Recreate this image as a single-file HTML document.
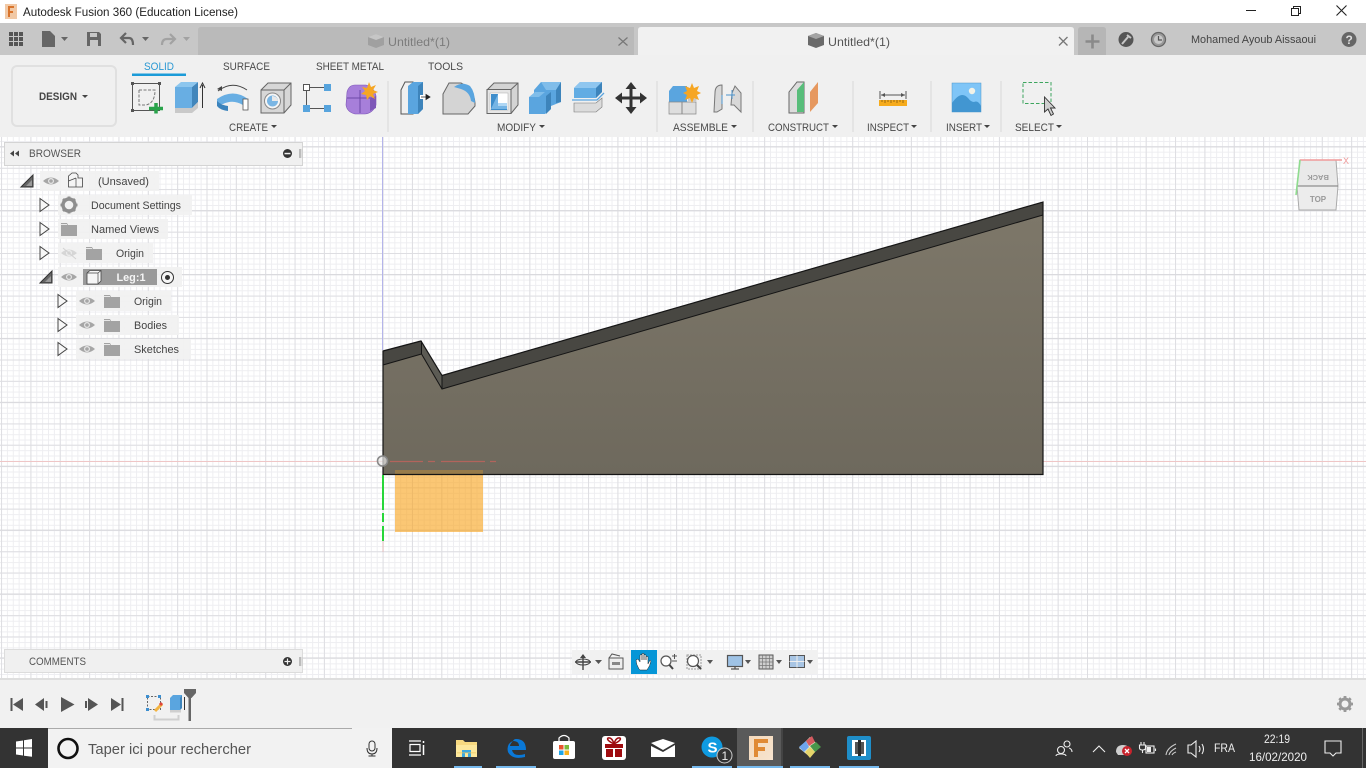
<!DOCTYPE html>
<html><head><meta charset="utf-8"><title>Autodesk Fusion 360</title>
<style>
html,body{margin:0;padding:0;width:1366px;height:768px;overflow:hidden;background:#fff}
svg{display:block}
text{font-family:"Liberation Sans",sans-serif}
.t{font-size:11px;fill:#4a4a4a}
.l{font-size:11px;fill:#484848}
</style></head><body>
<svg width="1366" height="768" viewBox="0 0 1366 768" xmlns="http://www.w3.org/2000/svg">
<defs>
<pattern id="gm" x="382.6" y="274.3" width="5.87" height="5.33" patternUnits="userSpaceOnUse"><path d="M.5 0V5.33M0 .5H5.87" stroke="#eeeef1" stroke-width="1" fill="none"/></pattern>
<pattern id="gM" x="382.6" y="274.3" width="29.35" height="21.3" patternUnits="userSpaceOnUse"><path d="M.5 0V21.3M0 .5H29.35" stroke="#dedee2" stroke-width="1" fill="none"/></pattern>
<pattern id="gX" x="0" y="274" width="100" height="63.9" patternUnits="userSpaceOnUse"><path d="M0 .5H100" stroke="#dadade" stroke-width="1" fill="none"/></pattern>
<linearGradient id="body" x1="0" y1="0" x2="0" y2="1"><stop offset="0" stop-color="#7d7769"/><stop offset="1" stop-color="#6e695d"/></linearGradient>
<linearGradient id="fus" x1="0" y1="0" x2="1" y2="1"><stop offset="0" stop-color="#f5d9bb"/><stop offset="1" stop-color="#f7e4cf"/></linearGradient>
<g id="eye"><path d="M-8 0Q0-7 8 0Q0 7-8 0Z" fill="#a6a6a6"/><circle r="3" fill="#e6e6e6"/><circle r="1.8" fill="#a6a6a6"/></g>
<g id="folder"><path d="M0 1H6L7 3H16V14H0Z" fill="#a3a3a3"/><rect y="2" width="6" height="1" fill="#e8e8e8"/></g>
<path id="tri" d="M0-6.5L9 0L0 6.5Z" fill="#f7f7f7" stroke="#444" stroke-width="1"/>
<g id="open"><path d="M-6 6L6-6V6Z" fill="#666" stroke="#333" stroke-width="1"/><path d="M-1 5L5-1V5Z" fill="#999"/></g>
</defs>

<!-- canvas -->
<rect x="0" y="137" width="1366" height="543" fill="#fff"/>
<rect x="0" y="137" width="1366" height="543" fill="url(#gm)"/>
<rect x="0" y="137" width="1366" height="543" fill="url(#gM)"/>
<rect x="0" y="137" width="1366" height="543" fill="url(#gX)"/>
<path d="M0 461.5H1366" stroke="#efc6c6" stroke-width="1"/>
<path d="M382.5 137V350" stroke="#b4b4ea" stroke-width="1"/>

<!-- title bar -->
<rect width="1366" height="23" fill="#fff"/>
<rect x="5" y="4" width="12" height="15" fill="#f1c9a6"/>
<path d="M8 6H14V8H10V11H13V13H10V17H8Z" fill="#d9742c"/>
<text x="23" y="16" font-size="12.2" fill="#222" textLength="215" lengthAdjust="spacingAndGlyphs">Autodesk Fusion 360 (Education License)</text>
<path d="M1246 10.5H1256" stroke="#222"/>
<path d="M1291.5 8.5H1298.5V15.5H1291.5ZM1293.5 8.5V6.5H1300.5V13.5H1298.5" fill="none" stroke="#222"/>
<path d="M1336.5 5.5L1346.5 15.5M1346.5 5.5L1336.5 15.5" stroke="#222" stroke-width="1.1"/>

<!-- tab bar -->
<rect y="23" width="1366" height="32" fill="#c7c7c7"/>
<path d="M198 55V30Q198 27 201 27H634V55Z" fill="#bababa"/>
<path d="M638 55V30Q638 27 641 27H1071Q1074 27 1074 30V55Z" fill="#f1f1f1"/>
<path d="M1078 55V30Q1078 27 1081 27H1103Q1106 27 1106 30V55Z" fill="#b6b6b6"/>
<path d="M1092.5 34.5V48.5M1085.5 41.5H1099.5" stroke="#8a8a8a" stroke-width="2.6"/>
<!-- app grid -->
<g fill="#555"><rect x="9" y="32" width="4" height="4"/><rect x="14" y="32" width="4" height="4"/><rect x="19" y="32" width="4" height="4"/><rect x="9" y="37" width="4" height="4"/><rect x="14" y="37" width="4" height="4"/><rect x="19" y="37" width="4" height="4"/><rect x="9" y="42" width="4" height="4"/><rect x="14" y="42" width="4" height="4"/><rect x="19" y="42" width="4" height="4"/></g>
<path d="M42 31H50L55 36V47H42Z" fill="#666"/><path d="M61 37H68L64.5 41Z" fill="#666"/>
<path d="M87 32H99L101 34V46H87Z" fill="#666"/><rect x="90" y="33" width="7" height="4" fill="#c7c7c7"/><rect x="90" y="40" width="8" height="6" fill="#c7c7c7"/>
<path d="M126 33L121 38L126 43M121 38H129Q133 38 133 45" fill="none" stroke="#666" stroke-width="2.2"/><path d="M142 37H149L145.5 41Z" fill="#666"/>
<path d="M170 34L175 39L170 44M175 39H167Q162 39 162 45" fill="none" stroke="#a2a2a2" stroke-width="2.2"/><path d="M183 37H190L186.5 41Z" fill="#a2a2a2"/>
<!-- tab text -->
<path d="M368 37L376 34L384 37V45L376 48L368 45Z" fill="#a0a0a0"/><path d="M368 37L376 40L384 37L376 34Z" fill="#c6c6c6"/>
<text x="388" y="46" font-size="12" fill="#7c7c7c" textLength="62" lengthAdjust="spacingAndGlyphs">Untitled*(1)</text>
<path d="M618.5 37.5L627.5 45.5M627.5 37.5L618.5 45.5" stroke="#777" stroke-width="1.2"/>
<path d="M808 36L816 33L824 36V45L816 48L808 45Z" fill="#6a6a6a"/><path d="M808 36L816 39L824 36L816 33Z" fill="#a4a4a4"/>
<text x="828" y="46" font-size="12" fill="#555" textLength="62" lengthAdjust="spacingAndGlyphs">Untitled*(1)</text>
<path d="M1059 37L1067.5 45.5M1067.5 37L1059 45.5" stroke="#777" stroke-width="1.3"/>
<circle cx="1126" cy="39.5" r="7.5" fill="#555"/><path d="M1122 44L1128 37M1127 35L1131 38" stroke="#c7c7c7" stroke-width="2"/>
<circle cx="1158.5" cy="39.5" r="7" fill="#999" stroke="#666" stroke-width="1.3"/><circle cx="1158.5" cy="39.5" r="4.5" fill="#c7c7c7"/><path d="M1158.5 36V40H1162" fill="none" stroke="#555" stroke-width="1.2"/>
<text x="1191" y="43" font-size="11" fill="#444" textLength="125" lengthAdjust="spacingAndGlyphs">Mohamed Ayoub Aissaoui</text>
<circle cx="1349" cy="39.5" r="7.5" fill="#666"/><text x="1345.5" y="44" font-size="12" font-weight="bold" fill="#ddd">?</text>

<!-- toolbar -->
<rect y="55" width="1366" height="82" fill="#f0f0f0"/>
<rect x="12" y="66" width="104" height="60" rx="5" fill="#f0f0f0" stroke="#e0e0e0" stroke-width="2"/>
<text x="39" y="100" font-size="10.8" font-weight="bold" fill="#444" textLength="38" lengthAdjust="spacingAndGlyphs">DESIGN</text>
<path d="M82 95H88L85 98Z" fill="#444"/>
<text x="144" y="70" class="t" style="fill:#2a98d3" textLength="30" lengthAdjust="spacingAndGlyphs">SOLID</text>
<rect x="132" y="73.5" width="54" height="2.5" fill="#1b9bd8"/>
<text x="223" y="70" class="t" textLength="47" lengthAdjust="spacingAndGlyphs">SURFACE</text>
<text x="316" y="70" class="t" textLength="68" lengthAdjust="spacingAndGlyphs">SHEET METAL</text>
<text x="428" y="70" class="t" textLength="35" lengthAdjust="spacingAndGlyphs">TOOLS</text>

<!-- panel labels -->
<text x="229" y="131" class="l" textLength="39" lengthAdjust="spacingAndGlyphs">CREATE</text><path d="M271 125H277L274 128Z" fill="#444"/>
<text x="497" y="131" class="l" textLength="39" lengthAdjust="spacingAndGlyphs">MODIFY</text><path d="M539 125H545L542 128Z" fill="#444"/>
<text x="673" y="131" class="l" textLength="55" lengthAdjust="spacingAndGlyphs">ASSEMBLE</text><path d="M731 125H737L734 128Z" fill="#444"/>
<text x="768" y="131" class="l" textLength="61" lengthAdjust="spacingAndGlyphs">CONSTRUCT</text><path d="M832 125H838L835 128Z" fill="#444"/>
<text x="867" y="131" class="l" textLength="42" lengthAdjust="spacingAndGlyphs">INSPECT</text><path d="M911 125H917L914 128Z" fill="#444"/>
<text x="946" y="131" class="l" textLength="36" lengthAdjust="spacingAndGlyphs">INSERT</text><path d="M984 125H990L987 128Z" fill="#444"/>
<text x="1015" y="131" class="l" textLength="39" lengthAdjust="spacingAndGlyphs">SELECT</text><path d="M1056 125H1062L1059 128Z" fill="#444"/>
<g stroke="#e0e0e0" stroke-width="1.5"><path d="M388 81V132M657 81V132M753 81V132M853 81V132M931 81V132M1001 81V132"/></g>

<!-- create icons -->
<rect x="132.5" y="83.5" width="27" height="27" fill="none" stroke="#555" stroke-width="1"/>
<g fill="#555"><rect x="131" y="82" width="3" height="3"/><rect x="158" y="82" width="3" height="3"/><rect x="131" y="109" width="3" height="3"/></g>
<path d="M139 90V105H146Q155 103 155 90Z" fill="none" stroke="#777" stroke-dasharray="3 1.5"/>
<path d="M156 103V113.5M149 108.5H163" stroke="#29a34a" stroke-width="3.5"/>
<path d="M175 87H192V108H175Z" fill="#68aee3"/><path d="M192 87L198 82V102L192 108Z" fill="#4286bb"/><path d="M175 87L181 82H198L192 87Z" fill="#8cc6ee"/>
<path d="M175 108H192L198 102V108L192 113H175Z" fill="#c9c9c9"/>
<path d="M202.5 108V85M200 88L202.5 83L205 88" fill="none" stroke="#333" stroke-width="1"/>
<path d="M217 99Q233 88 248 99L248 109L243 109L243 105Q233 99 223 104L217 104Z" fill="#68aee3"/><path d="M217 101V106Q220 110 228 111V106Q221 105 217 101Z" fill="#3b83bc"/><rect x="243" y="99" width="5" height="11" fill="#fff" stroke="#555" stroke-width=".8"/>
<path d="M218 91Q232 80 247 90" fill="none" stroke="#444"/><path d="M217 89L222 86L222 91Z" fill="#444"/>
<path d="M261 90L268 83H291V105L284 113H261Z" fill="#d7d7d7" stroke="#666" stroke-width="1"/><path d="M261 90H284V113M284 90L291 83" fill="none" stroke="#666"/>
<circle cx="272.5" cy="101" r="8" fill="#f5f5f5" stroke="#888"/><circle cx="272.5" cy="101" r="5.5" fill="#7ab6e4"/><path d="M272 96A5.5 5.5 0 0 1 278 101H272Z" fill="#e9e9e9"/>
<rect x="303.5" y="84.5" width="6" height="6" fill="#fff" stroke="#555"/><rect x="324" y="84" width="7" height="7" fill="#57a4dd"/><rect x="303" y="105" width="7" height="7" fill="#57a4dd"/><rect x="324" y="105" width="7" height="7" fill="#57a4dd"/>
<path d="M310 87.5H324M310 108.5H324M306.5 91V105" stroke="#555"/>
<path d="M347 92Q349 85 355 85H366Q374 87 376 96V105Q373 113 365 114H355Q347 112 346 105Z" fill="#a77fda" stroke="#7e57b8" stroke-width=".6"/><path d="M347 98H372M360 90V113" stroke="#6e49a8" fill="none"/><path d="M370 99L376 96V108L370 111Z" fill="#7e57b8"/>
<path d="M369 82L371 87L376 85L373 90L378 92L373 94L375 99L370 96L367 100L366 95L361 94L365 91L362 87L367 88Z" fill="#f6a623"/>

<!-- modify icons -->
<path d="M401 90L405 82H413V114H401Z" fill="#f0f0f0" stroke="#555"/><path d="M408 86L413 82H423V109L418 114H408Z" fill="#5aa5df"/><path d="M418 86L423 82V109L418 114Z" fill="#3d84bb"/>
<rect x="420" y="95" width="8" height="4" fill="#fff"/><path d="M421 97H429M426 94.5L430 97L426 99.5Z" fill="#222" stroke="#222" stroke-width=".8"/>
<path d="M443 94L449 83H461Q474 90 475 103V106L468 114H443Z" fill="#d4d4d4" stroke="#666"/><path d="M454 87Q462 81 470 86Q475 92 475 103L471 101Q470 92 461 89Z" fill="#5aa5df"/>
<path d="M487.5 89.5L494 83H518V105L511 113.5M511 89.5L518 83" fill="#d4d4d4" stroke="#666"/><rect x="487" y="89.5" width="24" height="24" fill="#e6e6e6" stroke="#666"/>
<rect x="490" y="93" width="18" height="17" fill="#fff" stroke="#aaa" stroke-width=".5"/><path d="M491 94H498V106H507V110H491Z" fill="#3e8dcb"/><path d="M498 94V103H507V109H491Z" fill="#8fc6ef" opacity=".7"/>
<path d="M529 97L534 97V90L541 82H561V102L551 106V109L545 114H529Z" fill="#5aa5df"/><path d="M529 97L535 92H545L539 97Z" fill="#7fbdea"/><path d="M546 90L541 82H561L556 90Z" fill="#80bdea"/><path d="M556 90L561 82V102L556 103Z" fill="#3d84bb"/><path d="M546 96L551 92V109L546 114Z" fill="#3d84bb"/>
<path d="M574 88L580 82H602V92L596 98H574Z" fill="#62ace3"/><path d="M574 88L580 82H602L596 88Z" fill="#8fc6ef"/><path d="M596 88L602 82V92L596 98Z" fill="#3d84bb"/>
<path d="M572 100H597L604 93" fill="none" stroke="#5aa5df" stroke-width="1.3"/><path d="M574 103H596L602 98V107L596 112H574Z" fill="#dcdcdc" stroke="#777" stroke-width=".6"/>
<path d="M631 84V112M617 98H645" stroke="#333" stroke-width="3"/><path d="M631 82L625.5 89H636.5ZM631 114L625.5 107H636.5ZM615 98L622 92.5V103.5ZM647 98L640 92.5V103.5Z" fill="#333"/>

<!-- assemble -->
<path d="M669 91L673 86H687V102H669Z" fill="#5aa5df"/><path d="M669 102H696V114H669Z" fill="#dedede" stroke="#888" stroke-width=".7"/><path d="M682 102V114" stroke="#888"/><path d="M696 102L697 98H688V102Z" fill="#c9c9c9"/>
<path d="M692 83L694 88L699 86L697 91L701 93L697 95L699 100L694 98L692 103L690 98L685 100L687 95L683 93L687 91L685 86L690 88Z" fill="#f6a623"/>
<path d="M715 93Q715 85 722 85V109L717 112L714 112Z" fill="#d8d8d8" stroke="#777"/><path d="M732 93L735 86L741 93V112L734 105H731Z" fill="#d8d8d8" stroke="#777"/><path d="M722 95V104M732 90V99M726 95H735" stroke="#4c93cc" fill="none"/>

<!-- construct -->
<path d="M789 92L797 82H804V113H789Z" fill="#dcdcdc" stroke="#666"/><path d="M797 90L804 82V112L797 112Z" fill="#58bd7a"/><path d="M810 92L818 82V103L810 112Z" fill="#e6985f"/>

<!-- inspect -->
<path d="M880 91V99M906 91V99M881 95H905" stroke="#555"/><path d="M881 95L885 93V97ZM905 95L901 93V97Z" fill="#555"/><rect x="879" y="100" width="28" height="6" fill="#f6ab1c"/><path d="M882 100V102M885 100V103M888 100V102M891 100V103M894 100V102M897 100V103M900 100V102M903 100V103" stroke="#9a6a10"/>

<!-- insert -->
<rect x="952" y="83" width="29" height="29" fill="#7fc5f7" stroke="#4f96c9" stroke-width=".5"/><circle cx="972" cy="91" r="3.2" fill="#f2f2e8"/><path d="M952 112V103Q961 90 968 98Q971 102 974 102Q978 100 981 106V112Z" fill="#4296d1"/>

<!-- select -->
<rect x="1023" y="82.5" width="28" height="21" fill="none" stroke="#3da55e" stroke-dasharray="3.5 2"/>
<path d="M1044.5 97V112L1048 109L1051 115.5L1053.5 114L1050.5 108H1055Z" fill="#cfcfcf" stroke="#333" stroke-width=".9"/>

<!-- browser panel -->
<rect x="4.5" y="142.5" width="298" height="23" fill="#f0f0f0" stroke="#d4d4d4"/>
<path d="M10 153.5L14 150.5V156.5ZM15 153.5L19 150.5V156.5Z" fill="#444"/>
<text x="29" y="157" font-size="11" fill="#555" textLength="52" lengthAdjust="spacingAndGlyphs">BROWSER</text>
<circle cx="287.5" cy="153.5" r="4.5" fill="#333"/><rect x="284.5" y="152.8" width="6" height="1.5" fill="#f0f0f0"/>
<path d="M300 149V158" stroke="#888"/><path d="M302 149V158" stroke="#ccc"/>

<!-- tree -->
<g fill="#f1f1f1" fill-opacity=".92">
<rect x="40" y="171" width="119" height="20"/>
<rect x="58" y="195" width="134" height="20"/>
<rect x="58" y="219" width="110" height="20"/>
<rect x="58" y="243" width="95" height="20"/>
<rect x="58" y="267" width="124" height="20"/>
<rect x="76" y="291" width="95" height="20"/>
<rect x="76" y="315" width="103" height="20"/>
<rect x="76" y="339" width="115" height="20"/>
</g>
<use href="#open" x="27" y="181"/><use href="#eye" x="51" y="181"/>
<path d="M68.5 176L72 173H76L78 175V178L82.5 178V187H68.5Z" fill="#f4f4f4" stroke="#444" stroke-width=".8"/><path d="M76 178V187M68.5 181L76 178" fill="none" stroke="#444" stroke-width=".7"/>
<text x="98" y="185" font-size="11" fill="#444" textLength="51" lengthAdjust="spacingAndGlyphs">(Unsaved)</text>

<use href="#tri" x="40" y="205"/>
<g transform="translate(69 205)"><circle r="6" fill="none" stroke="#8e8e8e" stroke-width="3.4"/><path d="M0-8.5V-5.5M0 8.5V5.5M-8.5 0H-5.5M8.5 0H5.5M-6-6L-4-4M6 6L4 4M-6 6L-4 4M6-6L4-4" stroke="#8e8e8e" stroke-width="2.8"/></g>
<text x="91" y="209" font-size="11" fill="#444" textLength="90" lengthAdjust="spacingAndGlyphs">Document Settings</text>

<use href="#tri" x="40" y="229"/><use href="#folder" x="61" y="222"/>
<text x="91" y="233" font-size="11" fill="#444" textLength="68" lengthAdjust="spacingAndGlyphs">Named Views</text>

<use href="#tri" x="40" y="253"/>
<g opacity=".35"><use href="#eye" x="69" y="253"/><path d="M63 248L76 259" stroke="#999"/></g><use href="#folder" x="86" y="246"/>
<text x="116" y="257" font-size="11" fill="#444" textLength="28" lengthAdjust="spacingAndGlyphs">Origin</text>

<use href="#open" x="46" y="277"/><use href="#eye" x="69" y="277"/>
<rect x="83" y="269" width="74" height="16" fill="#9a9a9a"/>
<path d="M87 273L90 270.5H101V281L98 284H87Z" fill="#f6f6f6" stroke="#444" stroke-width=".8"/><path d="M87 273H98V284M98 273L101 270.5" fill="none" stroke="#444" stroke-width=".7"/>
<text x="116.5" y="281" font-size="11" font-weight="bold" fill="#f5f5f5" textLength="29" lengthAdjust="spacingAndGlyphs">Leg:1</text>
<circle cx="167.5" cy="277.5" r="6" fill="#f6f6f6" stroke="#333"/><circle cx="167.5" cy="277.5" r="2.5" fill="#333"/>

<use href="#tri" x="58" y="301"/><use href="#eye" x="87" y="301"/><use href="#folder" x="104" y="294"/>
<text x="134" y="305" font-size="11" fill="#444" textLength="28" lengthAdjust="spacingAndGlyphs">Origin</text>
<use href="#tri" x="58" y="325"/><use href="#eye" x="87" y="325"/><use href="#folder" x="104" y="318"/>
<text x="134" y="329" font-size="11" fill="#444" textLength="33" lengthAdjust="spacingAndGlyphs">Bodies</text>
<use href="#tri" x="58" y="349"/><use href="#eye" x="87" y="349"/><use href="#folder" x="104" y="342"/>
<text x="134" y="353" font-size="11" fill="#444" textLength="45" lengthAdjust="spacingAndGlyphs">Sketches</text>

<!-- model -->
<rect x="395" y="470" width="88" height="62" fill="#f9a41e" fill-opacity=".62"/>
<path d="M383 365L421.5 354L442 389L1043 215V474.5H383Z" fill="url(#body)"/>
<rect x="395" y="470" width="88" height="4.5" fill="#f9a41e" fill-opacity=".3"/>
<path d="M383 351L421 341L442 375.5L1043 202V215L442 389L421.5 354L383 365Z" fill="#484742"/>
<path d="M421 341L442 375.5V389L421.5 354Z" fill="#5c5b54"/>
<path d="M383 351L421 341L442 375.5L1043 202V474.5H383Z" fill="none" stroke="#151515" stroke-width="1.2"/>
<path d="M383 365L421.5 354L442 389L1043 215M421.5 341V354M442 375.5V389" fill="none" stroke="#151515" stroke-width="1"/>
<path d="M390 461.5H423M428 461.5H435M441 461.5H485M490 461.5H496" stroke="#b2645c" stroke-width="1.2"/>
<path d="M383 475V510M383 513V522M383 526V541" stroke="#27d63a" stroke-width="2"/>
<path d="M383 541V552" stroke="#e4bcbc"/>
<circle cx="382.5" cy="461" r="5" fill="#e8e8e8" fill-opacity=".7" stroke="#888" stroke-width="1.6"/>

<!-- view cube -->
<path d="M1300 160H1336L1338 186H1297Z" fill="#e9e9e9" stroke="#aaa"/>
<path d="M1297 186H1338L1336 210H1299Z" fill="#ececec" stroke="#aaa"/>
<path d="M1297 186H1338" stroke="#777"/>
<path d="M1300 160H1342" stroke="#f09a9a" stroke-width="1.6"/><text x="1343" y="164" font-size="9" fill="#f09a9a">X</text>
<path d="M1300 160L1296 195" stroke="#8fdc8f" stroke-width="1.6"/>
<text transform="translate(1318 170) rotate(180)" y="-5" text-anchor="middle" font-size="7.5" font-weight="bold" fill="#999">BACK</text>
<text x="1318" y="202" text-anchor="middle" font-size="8" font-weight="bold" fill="#999">TOP</text>

<!-- comments -->
<rect x="4.5" y="649.5" width="298" height="23" fill="#f0f0f0" stroke="#dcdcdc"/>
<text x="29" y="665" font-size="11" fill="#555" textLength="57" lengthAdjust="spacingAndGlyphs">COMMENTS</text>
<circle cx="287.5" cy="661.5" r="4.5" fill="#333"/><path d="M284.5 661.5H290.5M287.5 658.5V664.5" stroke="#f0f0f0" stroke-width="1.2"/>
<path d="M300 657V666" stroke="#888"/><path d="M302 657V666" stroke="#ccc"/>

<!-- nav bar -->
<rect x="572" y="650" width="246" height="24" fill="#f1f1f1"/>
<rect x="631" y="650" width="26" height="24" fill="#0696d7"/>
<path d="M583 655V670M575 662H591" stroke="#444" stroke-width="1.4"/><ellipse cx="583" cy="662" rx="7" ry="3" fill="none" stroke="#444"/><path d="M580 658L583 654L586 658Z" fill="#444"/><path d="M595 660H602L598.5 664Z" fill="#555"/>
<rect x="609" y="658" width="14" height="11" fill="#eee" stroke="#555"/><rect x="612" y="662" width="8" height="3" fill="#888"/><path d="M609 658L612 654L620 656" fill="none" stroke="#555"/>
<path d="M639 669Q636 664 636 660L638 659L640 662V655L642 654.5V660V653.5H644V660V654.5L646 655V660V656.5H648V664L650 660L651 661Q650 666 647 670H640Z" fill="#fff" stroke="#222" stroke-width=".5"/>
<circle cx="666" cy="661" r="5" fill="#fff" stroke="#555" stroke-width="1.2"/><path d="M669.5 665L673 669" stroke="#444" stroke-width="2"/><path d="M672 656H677M674.5 654V659M672 661H677" stroke="#555"/>
<rect x="687" y="655" width="14" height="14" fill="none" stroke="#999" stroke-dasharray="2 1"/><circle cx="693" cy="661" r="5.5" fill="#fff" stroke="#555" stroke-width="1.2"/><path d="M697 665L701 669" stroke="#444" stroke-width="2"/><path d="M707 660H713L710 664Z" fill="#555"/>
<rect x="727.5" y="655.5" width="15" height="11" fill="#9fc3e6" stroke="#555" stroke-width="1.2"/><path d="M731 669H739M735 666.5V669" stroke="#555" stroke-width="1.3"/><path d="M745 660H751L748 664Z" fill="#555"/>
<rect x="759" y="655" width="14" height="14" fill="#cfcfcf" stroke="#555"/><path d="M762.5 655V669M766 655V669M769.5 655V669M759 658.5H773M759 662H773M759 665.5H773" stroke="#777" stroke-width=".7"/><path d="M776 660H782L779 664Z" fill="#555"/>
<rect x="789.5" y="655.5" width="15" height="12" fill="#a8c5e4" stroke="#555"/><path d="M797 655.5V667.5M789.5 661.5H804.5" stroke="#eee"/><path d="M807 660H813L810 664Z" fill="#555"/>

<!-- timeline -->
<rect y="678" width="1366" height="2" fill="#dedede"/>
<rect y="680" width="1366" height="48" fill="#f1f1f1"/>
<path d="M11.5 698V711" stroke="#555" stroke-width="2"/><path d="M13 704.5L23 698V711Z" fill="#555"/>
<path d="M35 704.5L44 698V711Z" fill="#555"/><rect x="45.5" y="701" width="2" height="7" fill="#555"/>
<path d="M61 697L74.5 704.5L61 712Z" fill="#555"/>
<rect x="85" y="701" width="2" height="7" fill="#555"/><path d="M88 698L98 704.5L88 711Z" fill="#555"/>
<path d="M111 698L121 704.5L111 711Z" fill="#555"/><path d="M122.5 698V711" stroke="#555" stroke-width="2"/>
<rect x="147.5" y="696.5" width="13" height="13" fill="none" stroke="#666" stroke-dasharray="2 1.5"/><rect x="146" y="695" width="3" height="3" fill="#3d8fd0"/><rect x="146" y="708" width="3" height="3" fill="#3d8fd0"/><rect x="158" y="695" width="3" height="3" fill="#3d8fd0"/>
<path d="M155 711L162 704" stroke="#f2b340" stroke-width="3"/><path d="M160 705L162 703" stroke="#e0453a" stroke-width="3"/>
<path d="M170 698L173 695H182V708L180 710H170Z" fill="#5aa5df"/><path d="M180 698L182 695V708L180 710Z" fill="#3d84bb"/><rect x="170" y="710" width="11" height="2.5" fill="#cfcfcf"/>
<path d="M184.5 710V697" stroke="#333"/>
<path d="M154.5 715V719.5H178.5V715" fill="none" stroke="#cfcfcf" stroke-width="2"/>
<path d="M184 689H196V693L191.5 698H188.5L184 693Z" fill="#666"/><rect x="188.5" y="697" width="2.5" height="24" fill="#666"/>
<g transform="translate(1345 704)"><circle r="5" fill="none" stroke="#999" stroke-width="3"/><path d="M0-8V-5M0 8V5M-8 0H-5M8 0H5M-5.7-5.7L-3.5-3.5M5.7 5.7L3.5 3.5M-5.7 5.7L-3.5 3.5M5.7-5.7L3.5-3.5" stroke="#999" stroke-width="2.8"/></g>

<!-- taskbar -->
<rect y="728" width="1366" height="40" fill="#333"/>
<path d="M16 741.5L23 740.5V747.5H16ZM24 740.3L32 739V747.5H24ZM16 748.5H23V755.5L16 754.5ZM24 748.5H32V756.8L24 755.7Z" fill="#fff"/>
<rect x="48" y="728" width="344" height="40" fill="#f2f2f2"/><rect x="48" y="728" width="304" height="1" fill="#aaa"/>
<circle cx="68" cy="748.5" r="9.5" fill="none" stroke="#111" stroke-width="2.6"/>
<text x="88" y="754" font-size="14.5" fill="#555" textLength="163" lengthAdjust="spacingAndGlyphs">Taper ici pour rechercher</text>
<rect x="369" y="741" width="6" height="10" rx="3" fill="none" stroke="#333"/><path d="M367 748Q367 754 372 754Q377 754 377 748M372 754V756M368.5 756H375.5" fill="none" stroke="#333"/>
<path d="M409 741H421M409 755H421M410 744.5H420V751.5H410Z" fill="none" stroke="#fff" stroke-width="1.2"/><path d="M423.5 741V743M423.5 745V755" stroke="#fff" stroke-width="1.5"/>

<!-- task icons -->
<path d="M456 740H463L465 742H477V756H456Z" fill="#f7d980"/><path d="M456 745H477V757H456Z" fill="#fde89c"/><path d="M462 750H471V757H468V753H465V757H462Z" fill="#3ba9e0"/><rect x="457" y="752" width="19" height="1.5" fill="#ecc55f" opacity=".5"/>
<path d="M516 739Q526 739 526 750H512Q513 755 519 755Q522 755 525 754V757Q512 760 508 752Q506 744 513 741Q510 744 510 746H519Q519 741 513 741Q514 739 516 739Z" fill="#0a78d7"/>
<rect x="553" y="741" width="22" height="18" rx="2" fill="#fff"/><path d="M559 741V738Q564 733 569 738V741" fill="none" stroke="#fff" stroke-width="1.2"/>
<rect x="559" y="745" width="4.5" height="4.5" fill="#e8542f"/><rect x="564.5" y="745" width="4.5" height="4.5" fill="#7cbb3c"/><rect x="559" y="750.5" width="4.5" height="4.5" fill="#1fa6e8"/><rect x="564.5" y="750.5" width="4.5" height="4.5" fill="#f8b21e"/>
<rect x="602" y="736" width="24" height="24" rx="3" fill="#fff"/><path d="M605 744H623V748H605ZM606 749H613V757H606ZM615 749H622V757H615Z" fill="#9e0b0f"/><path d="M614 744Q606 740 608 738Q612 737 614 744Q616 737 620 738Q622 740 614 744Z" fill="none" stroke="#9e0b0f" stroke-width="1.5"/>
<path d="M651 743L663 739L675 743L663 750Z" fill="#fff"/><path d="M651 746L663 752L675 745V757H651Z" fill="#fff"/>
<circle cx="712" cy="747" r="10.5" fill="#0f9ae0"/><text x="707.5" y="752.5" font-size="15" font-weight="bold" fill="#fff">S</text>
<circle cx="724.5" cy="755.5" r="7.5" fill="#333" stroke="#ccc"/><text x="721.5" y="760" font-size="12" fill="#eee">1</text>
<rect x="737" y="728" width="46" height="40" fill="#5a5a5a"/><rect x="781" y="728" width="2" height="40" fill="#444"/>
<rect x="749" y="736" width="24" height="24" fill="url(#fus)"/><path d="M754 739H768V743H758V747H765V751H758V757H754Z" fill="#e08a35"/>
<path d="M810 737L820 747L810 757L799 748Z" fill="#e9e9d5"/><path d="M799 747L806 741L809 747L804 752Z" fill="#6fa5ec"/><path d="M806 741L812 736L815 742L809 746Z" fill="#d65a5f"/><path d="M810 746L816 742L821 747L815 752Z" fill="#49964b"/><path d="M805 752L810 747L815 752L810 758Z" fill="#e5d46a"/>
<rect x="847" y="736" width="24" height="24" rx="2" fill="#1f8ec9"/><rect x="852" y="740" width="14" height="16" fill="#fff"/><rect x="855" y="742" width="3" height="12" fill="#555"/><rect x="861" y="742" width="3" height="12" fill="#555"/><rect x="858" y="740" width="3" height="16" fill="#2b2b2b"/>
<g fill="#76b9ed"><rect x="454" y="766" width="28" height="2"/><rect x="496" y="766" width="40" height="2"/><rect x="692" y="766" width="40" height="2"/><rect x="737" y="766" width="46" height="2"/><rect x="790" y="766" width="40" height="2"/><rect x="839" y="766" width="40" height="2"/></g>

<!-- tray -->
<g fill="none" stroke="#eee" stroke-width="1.1">
<circle cx="1061" cy="750" r="3.5"/><path d="M1056 756Q1056 754 1061 754Q1066 754 1066 756"/><circle cx="1067" cy="744" r="3"/><path d="M1069 748Q1072 749 1072 752"/>
<path d="M1093 752L1099 746L1105 752"/>
<path d="M1141 742V745M1144 742V745M1139.5 745H1145.5V748Q1145.5 750 1142.5 750Q1139.5 750 1139.5 748ZM1142.5 750V753"/>
<rect x="1146" y="746" width="8" height="7"/><path d="M1155.5 748.5V751"/>
<path d="M1166 755Q1167 748 1176 744M1169 755Q1170 751 1176 748M1172 755Q1173 753 1176 752" stroke="#ccc"/>
<path d="M1188 745H1191L1196 741V757L1191 753H1188ZM1199 746Q1201 749 1199 752M1202 744Q1205 749 1202 754"/>
<path d="M1325 741H1341V753H1336L1333 756L1330 753H1325Z"/>
</g>
<rect x="1147" y="747" width="4" height="5" fill="#eee"/>
<path d="M1116 752Q1116 745 1123 745Q1129 745 1129 750V755H1118Z" fill="#cfcfcf"/><circle cx="1127" cy="751" r="5" fill="#c8232c"/><path d="M1125 749L1129 753M1129 749L1125 753" stroke="#fff" stroke-width="1.3"/>
<text x="1214" y="752" font-size="11.8" fill="#eee" textLength="21" lengthAdjust="spacingAndGlyphs">FRA</text>
<text x="1264" y="743" font-size="11.8" fill="#eee" textLength="26" lengthAdjust="spacingAndGlyphs">22:19</text>
<text x="1249" y="761" font-size="11.8" fill="#eee" textLength="58" lengthAdjust="spacingAndGlyphs">16/02/2020</text>
<rect x="1362" y="728" width="1" height="40" fill="#666"/>
</svg>
</body></html>
